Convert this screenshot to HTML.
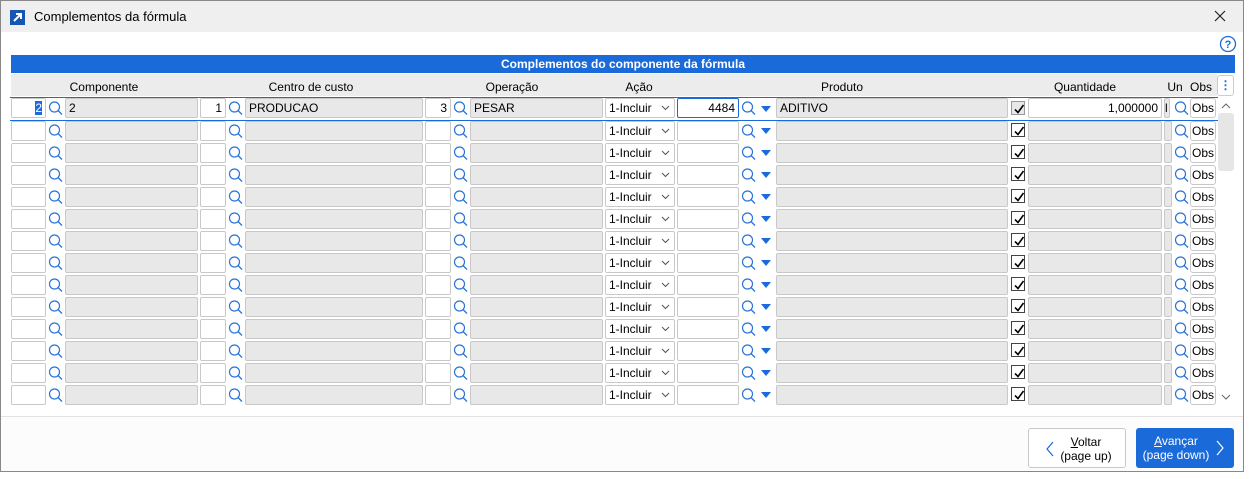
<!DOCTYPE html>
<html><head><meta charset="utf-8"><style>
*{box-sizing:border-box;margin:0;padding:0}
body{width:1258px;height:479px;background:#fff;position:relative;overflow:hidden;font-family:"Liberation Sans",sans-serif;font-size:12px;color:#000}
.dlg{position:absolute;left:0;top:0;width:1244px;height:472px;border:1px solid #888;background:#fff}
.title{position:absolute;left:0;top:0;width:1242px;height:31px;background:#efefef}
.title .t{position:absolute;left:33px;top:8px;font-size:13px}
.x{position:absolute;left:1213px;top:9px}
.logo{position:absolute;left:9px;top:9px;width:15px;height:15px;background:#1655b0}
.bar{position:absolute;left:10px;top:54px;width:1224px;height:18px;background:#1b6ad9;color:#fff;font-weight:bold;text-align:center;line-height:18px}
.hdr{position:absolute;left:10px;top:73px;width:1206px;height:22px;background:#ececec}
.hdr span{position:absolute;top:6px;transform:translateX(-50%);white-space:nowrap}
.row{position:absolute;left:9px;width:1208px;height:22px}
.row>*{position:absolute;top:1px;height:20px}
.in{background:#fff;border:1px solid #c8c8c8;border-radius:2px;text-align:right;padding:3px 3px;line-height:13px}
.ds{background:#e8e8e8;border:1px solid #c8c8c8;border-radius:2px;padding:3px 3px;line-height:13px}
.mg{width:17px}
.a{left:1px;width:35px}.m1{left:37px}.d1{left:55px;width:133px}
.b{left:190px;width:26px}.m2{left:217px}.d2{left:235px;width:178px}
.c{left:415px;width:26px}.m3{left:442px}.d3{left:460px;width:133px}
.s{left:595px;width:70px;background:#fff;border:1px solid #c8c8c8;border-radius:2px;padding:3px 3px;line-height:13px}
.s svg{position:absolute;right:4px;top:6px}
.p{left:667px;width:62px}.m4{left:730px}.ar{left:751px;top:8px!important;height:0;border-left:5px solid transparent;border-right:5px solid transparent;border-top:6px solid #1b6ad9}
.d4{left:766px;width:232px}
.ck{left:1001px;top:3px!important;width:14px;height:14px!important;border:1px solid #444;background:#fff}
.ck svg{position:absolute;left:1px;top:1px}
.q{left:1018px;width:134px}.u{left:1154px;width:6px}.m5{left:1163px}
.o{left:1180px;width:26px;background:#fff;border:1px solid #c8c8c8;border-radius:3px;text-align:center;line-height:18px}
.btn{position:absolute;top:427px;width:98px;height:40px;border-radius:3px;text-align:center;font-size:12px;line-height:14px;padding-top:6px}
</style></head><body>
<div class="dlg">
<div class="title"><div class="logo"><svg width="15" height="15"><path d="M4 11L11 4M6 4H11V9" stroke="#fff" stroke-width="2" fill="none"/></svg></div><div class="t">Complementos da fórmula</div><svg class="x" width="12" height="12"><path d="M1 1L11 11M11 1L1 11" stroke="#222" stroke-width="1.2"/></svg></div>
<svg style="position:absolute;left:1218px;top:34px" width="18" height="18"><circle cx="9" cy="9" r="7.5" fill="none" stroke="#1b6ad9" stroke-width="1.3"/><text x="9" y="13" text-anchor="middle" font-size="11" font-weight="bold" fill="#1b6ad9" font-family="Liberation Sans">?</text></svg>
<div class="bar">Complementos do componente da fórmula</div>
<div class="hdr"><span style="left:93px">Componente</span><span style="left:300px">Centro de custo</span><span style="left:501px">Operação</span><span style="left:628px">Ação</span><span style="left:831px">Produto</span><span style="left:1074px">Quantidade</span><span style="left:1164px">Un</span><span style="left:1190px">Obs</span></div>
<div style="position:absolute;left:1216px;top:74px;width:17px;height:21px;background:#fff;border:1px solid #ccc;border-radius:3px;color:#1b6ad9;text-align:center;font-weight:bold;line-height:18px">⋮</div>
<div style="position:absolute;left:1217px;top:112px;width:16px;height:58px;background:#e6e6e6;border-radius:3px"></div>
<svg style="position:absolute;left:1220px;top:102px" width="10" height="6"><path d="M1 5L5 1L9 5" stroke="#666" fill="none"/></svg>
<svg style="position:absolute;left:1220px;top:393px" width="10" height="6"><path d="M1 1L5 5L9 1" stroke="#666" fill="none"/></svg>
<svg width="0" height="0" style="position:absolute"><defs><symbol id="mg" viewBox="0 0 17 20"><circle cx="7.5" cy="9" r="5" fill="none" stroke="#2a74d8" stroke-width="1.2"/><path d="M11 12.5L15 16.5" stroke="#2a74d8" stroke-width="1.3"/></symbol><symbol id="ck" viewBox="0 0 12 12"><path d="M2 6.5L5 9.5L10.5 2" stroke="#000" stroke-width="1.6" fill="none"/></symbol><symbol id="dn" viewBox="0 0 9 6"><path d="M1 1L4.5 4.5L8 1" stroke="#555" fill="none"/></symbol></defs></svg>

<div class="row" style="top:96px;border-top:1px solid #1b6ad9;border-bottom:1px solid #1b6ad9;height:24px">
<div class="in a" style="top:0"><span style="background:#1b6ad9;color:#fff">2</span></div><svg class="mg m1" style="top:0"><use href="#mg"/></svg><div class="ds d1" style="top:0">2</div>
<div class="in b" style="top:0">1</div><svg class="mg m2" style="top:0"><use href="#mg"/></svg><div class="ds d2" style="top:0">PRODUCAO</div>
<div class="in c" style="top:0">3</div><svg class="mg m3" style="top:0"><use href="#mg"/></svg><div class="ds d3" style="top:0">PESAR</div>
<div class="s" style="top:0">1-Incluir<svg width="9" height="6"><use href="#dn"/></svg></div>
<div class="in p" style="top:0;border-color:#1b6ad9">4484</div><svg class="mg m4" style="top:0"><use href="#mg"/></svg><div class="ar"></div><div class="ds d4" style="top:0">ADITIVO</div>
<div class="ck" style="background:#e8e8e8;border-color:#999"><svg width="12" height="12"><use href="#ck"/></svg></div>
<div class="in q" style="top:0">1,000000</div><div class="ds u" style="top:0;padding:3px 0">l</div><svg class="mg m5" style="top:0"><use href="#mg"/></svg><div class="o" style="top:0">Obs</div>
</div>

<div class="row" style="top:119px"><div class="in a"></div><svg class="mg m1"><use href="#mg"/></svg><div class="ds d1"></div><div class="in b"></div><svg class="mg m2"><use href="#mg"/></svg><div class="ds d2"></div><div class="in c"></div><svg class="mg m3"><use href="#mg"/></svg><div class="ds d3"></div><div class="s">1-Incluir<svg width="9" height="6"><use href="#dn"/></svg></div><div class="in p"></div><svg class="mg m4"><use href="#mg"/></svg><div class="ar"></div><div class="ds d4"></div><div class="ck"><svg width="12" height="12"><use href="#ck"/></svg></div><div class="ds q"></div><div class="ds u"></div><svg class="mg m5"><use href="#mg"/></svg><div class="o">Obs</div></div>
<div class="row" style="top:141px"><div class="in a"></div><svg class="mg m1"><use href="#mg"/></svg><div class="ds d1"></div><div class="in b"></div><svg class="mg m2"><use href="#mg"/></svg><div class="ds d2"></div><div class="in c"></div><svg class="mg m3"><use href="#mg"/></svg><div class="ds d3"></div><div class="s">1-Incluir<svg width="9" height="6"><use href="#dn"/></svg></div><div class="in p"></div><svg class="mg m4"><use href="#mg"/></svg><div class="ar"></div><div class="ds d4"></div><div class="ck"><svg width="12" height="12"><use href="#ck"/></svg></div><div class="ds q"></div><div class="ds u"></div><svg class="mg m5"><use href="#mg"/></svg><div class="o">Obs</div></div>
<div class="row" style="top:163px"><div class="in a"></div><svg class="mg m1"><use href="#mg"/></svg><div class="ds d1"></div><div class="in b"></div><svg class="mg m2"><use href="#mg"/></svg><div class="ds d2"></div><div class="in c"></div><svg class="mg m3"><use href="#mg"/></svg><div class="ds d3"></div><div class="s">1-Incluir<svg width="9" height="6"><use href="#dn"/></svg></div><div class="in p"></div><svg class="mg m4"><use href="#mg"/></svg><div class="ar"></div><div class="ds d4"></div><div class="ck"><svg width="12" height="12"><use href="#ck"/></svg></div><div class="ds q"></div><div class="ds u"></div><svg class="mg m5"><use href="#mg"/></svg><div class="o">Obs</div></div>
<div class="row" style="top:185px"><div class="in a"></div><svg class="mg m1"><use href="#mg"/></svg><div class="ds d1"></div><div class="in b"></div><svg class="mg m2"><use href="#mg"/></svg><div class="ds d2"></div><div class="in c"></div><svg class="mg m3"><use href="#mg"/></svg><div class="ds d3"></div><div class="s">1-Incluir<svg width="9" height="6"><use href="#dn"/></svg></div><div class="in p"></div><svg class="mg m4"><use href="#mg"/></svg><div class="ar"></div><div class="ds d4"></div><div class="ck"><svg width="12" height="12"><use href="#ck"/></svg></div><div class="ds q"></div><div class="ds u"></div><svg class="mg m5"><use href="#mg"/></svg><div class="o">Obs</div></div>
<div class="row" style="top:207px"><div class="in a"></div><svg class="mg m1"><use href="#mg"/></svg><div class="ds d1"></div><div class="in b"></div><svg class="mg m2"><use href="#mg"/></svg><div class="ds d2"></div><div class="in c"></div><svg class="mg m3"><use href="#mg"/></svg><div class="ds d3"></div><div class="s">1-Incluir<svg width="9" height="6"><use href="#dn"/></svg></div><div class="in p"></div><svg class="mg m4"><use href="#mg"/></svg><div class="ar"></div><div class="ds d4"></div><div class="ck"><svg width="12" height="12"><use href="#ck"/></svg></div><div class="ds q"></div><div class="ds u"></div><svg class="mg m5"><use href="#mg"/></svg><div class="o">Obs</div></div>
<div class="row" style="top:229px"><div class="in a"></div><svg class="mg m1"><use href="#mg"/></svg><div class="ds d1"></div><div class="in b"></div><svg class="mg m2"><use href="#mg"/></svg><div class="ds d2"></div><div class="in c"></div><svg class="mg m3"><use href="#mg"/></svg><div class="ds d3"></div><div class="s">1-Incluir<svg width="9" height="6"><use href="#dn"/></svg></div><div class="in p"></div><svg class="mg m4"><use href="#mg"/></svg><div class="ar"></div><div class="ds d4"></div><div class="ck"><svg width="12" height="12"><use href="#ck"/></svg></div><div class="ds q"></div><div class="ds u"></div><svg class="mg m5"><use href="#mg"/></svg><div class="o">Obs</div></div>
<div class="row" style="top:251px"><div class="in a"></div><svg class="mg m1"><use href="#mg"/></svg><div class="ds d1"></div><div class="in b"></div><svg class="mg m2"><use href="#mg"/></svg><div class="ds d2"></div><div class="in c"></div><svg class="mg m3"><use href="#mg"/></svg><div class="ds d3"></div><div class="s">1-Incluir<svg width="9" height="6"><use href="#dn"/></svg></div><div class="in p"></div><svg class="mg m4"><use href="#mg"/></svg><div class="ar"></div><div class="ds d4"></div><div class="ck"><svg width="12" height="12"><use href="#ck"/></svg></div><div class="ds q"></div><div class="ds u"></div><svg class="mg m5"><use href="#mg"/></svg><div class="o">Obs</div></div>
<div class="row" style="top:273px"><div class="in a"></div><svg class="mg m1"><use href="#mg"/></svg><div class="ds d1"></div><div class="in b"></div><svg class="mg m2"><use href="#mg"/></svg><div class="ds d2"></div><div class="in c"></div><svg class="mg m3"><use href="#mg"/></svg><div class="ds d3"></div><div class="s">1-Incluir<svg width="9" height="6"><use href="#dn"/></svg></div><div class="in p"></div><svg class="mg m4"><use href="#mg"/></svg><div class="ar"></div><div class="ds d4"></div><div class="ck"><svg width="12" height="12"><use href="#ck"/></svg></div><div class="ds q"></div><div class="ds u"></div><svg class="mg m5"><use href="#mg"/></svg><div class="o">Obs</div></div>
<div class="row" style="top:295px"><div class="in a"></div><svg class="mg m1"><use href="#mg"/></svg><div class="ds d1"></div><div class="in b"></div><svg class="mg m2"><use href="#mg"/></svg><div class="ds d2"></div><div class="in c"></div><svg class="mg m3"><use href="#mg"/></svg><div class="ds d3"></div><div class="s">1-Incluir<svg width="9" height="6"><use href="#dn"/></svg></div><div class="in p"></div><svg class="mg m4"><use href="#mg"/></svg><div class="ar"></div><div class="ds d4"></div><div class="ck"><svg width="12" height="12"><use href="#ck"/></svg></div><div class="ds q"></div><div class="ds u"></div><svg class="mg m5"><use href="#mg"/></svg><div class="o">Obs</div></div>
<div class="row" style="top:317px"><div class="in a"></div><svg class="mg m1"><use href="#mg"/></svg><div class="ds d1"></div><div class="in b"></div><svg class="mg m2"><use href="#mg"/></svg><div class="ds d2"></div><div class="in c"></div><svg class="mg m3"><use href="#mg"/></svg><div class="ds d3"></div><div class="s">1-Incluir<svg width="9" height="6"><use href="#dn"/></svg></div><div class="in p"></div><svg class="mg m4"><use href="#mg"/></svg><div class="ar"></div><div class="ds d4"></div><div class="ck"><svg width="12" height="12"><use href="#ck"/></svg></div><div class="ds q"></div><div class="ds u"></div><svg class="mg m5"><use href="#mg"/></svg><div class="o">Obs</div></div>
<div class="row" style="top:339px"><div class="in a"></div><svg class="mg m1"><use href="#mg"/></svg><div class="ds d1"></div><div class="in b"></div><svg class="mg m2"><use href="#mg"/></svg><div class="ds d2"></div><div class="in c"></div><svg class="mg m3"><use href="#mg"/></svg><div class="ds d3"></div><div class="s">1-Incluir<svg width="9" height="6"><use href="#dn"/></svg></div><div class="in p"></div><svg class="mg m4"><use href="#mg"/></svg><div class="ar"></div><div class="ds d4"></div><div class="ck"><svg width="12" height="12"><use href="#ck"/></svg></div><div class="ds q"></div><div class="ds u"></div><svg class="mg m5"><use href="#mg"/></svg><div class="o">Obs</div></div>
<div class="row" style="top:361px"><div class="in a"></div><svg class="mg m1"><use href="#mg"/></svg><div class="ds d1"></div><div class="in b"></div><svg class="mg m2"><use href="#mg"/></svg><div class="ds d2"></div><div class="in c"></div><svg class="mg m3"><use href="#mg"/></svg><div class="ds d3"></div><div class="s">1-Incluir<svg width="9" height="6"><use href="#dn"/></svg></div><div class="in p"></div><svg class="mg m4"><use href="#mg"/></svg><div class="ar"></div><div class="ds d4"></div><div class="ck"><svg width="12" height="12"><use href="#ck"/></svg></div><div class="ds q"></div><div class="ds u"></div><svg class="mg m5"><use href="#mg"/></svg><div class="o">Obs</div></div>
<div class="row" style="top:383px"><div class="in a"></div><svg class="mg m1"><use href="#mg"/></svg><div class="ds d1"></div><div class="in b"></div><svg class="mg m2"><use href="#mg"/></svg><div class="ds d2"></div><div class="in c"></div><svg class="mg m3"><use href="#mg"/></svg><div class="ds d3"></div><div class="s">1-Incluir<svg width="9" height="6"><use href="#dn"/></svg></div><div class="in p"></div><svg class="mg m4"><use href="#mg"/></svg><div class="ar"></div><div class="ds d4"></div><div class="ck"><svg width="12" height="12"><use href="#ck"/></svg></div><div class="ds q"></div><div class="ds u"></div><svg class="mg m5"><use href="#mg"/></svg><div class="o">Obs</div></div>

<div style="position:absolute;left:0;top:415px;width:1242px;height:55px;background:#fcfcfc;border-top:1px solid #e2e2e2"></div>
<div class="btn" style="left:1027px;background:#fff;border:1px solid #c8c8c8;padding-left:18px"><span style="text-decoration:underline">V</span>oltar<br>(page up)<svg style="position:absolute;left:17px;top:12px" width="8" height="16"><path d="M7 1L1 8L7 15" stroke="#1b6ad9" fill="none" stroke-width="1.2"/></svg></div>
<div class="btn" style="left:1135px;background:#1b6ad9;color:#fff;padding-right:18px"><span style="text-decoration:underline">A</span>vançar<br>(page down)<svg style="position:absolute;left:80px;top:12px" width="8" height="16"><path d="M1 1L7 8L1 15" stroke="#fff" fill="none" stroke-width="1.2"/></svg></div>
</div>
</body></html>
